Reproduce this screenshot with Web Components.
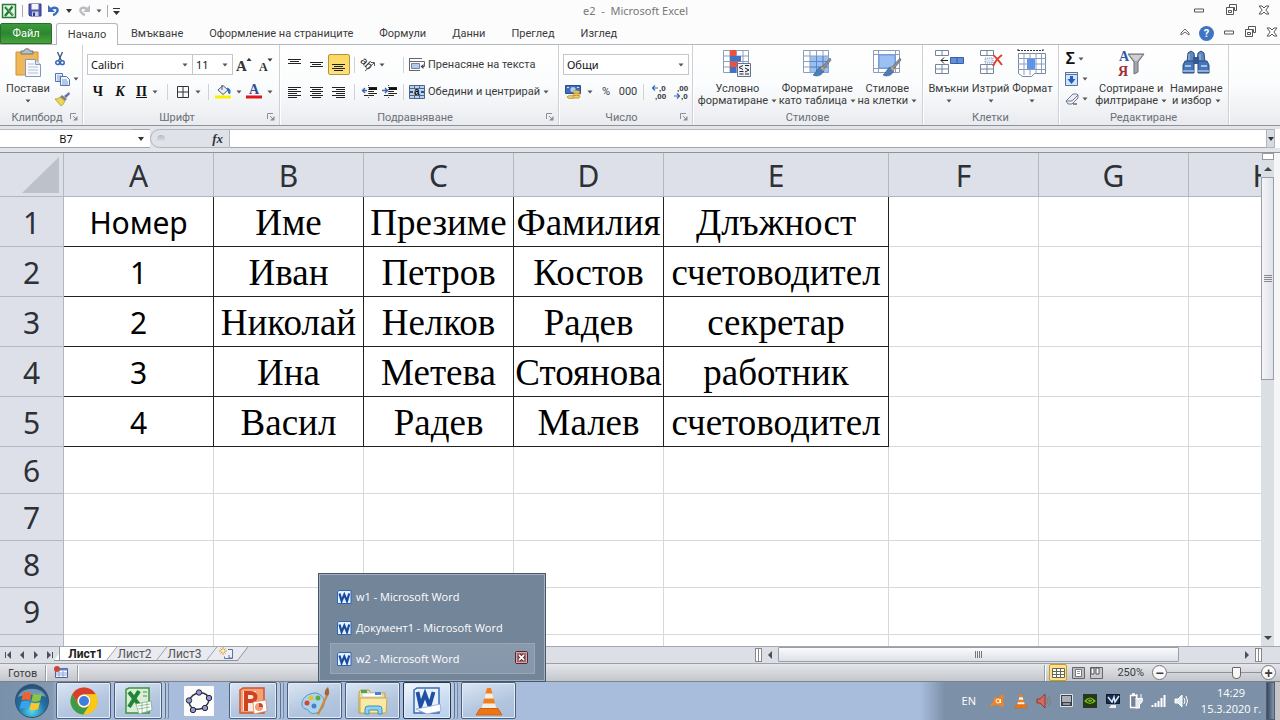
<!DOCTYPE html>
<html lang="bg">
<head>
<meta charset="utf-8">
<title>e2 - Microsoft Excel</title>
<style>
    html, body {
        margin: 0;
        height: 100%;
    }

    body {
        font: 11px/12px "Noto Sans", "Open Sans", sans-serif;
        color: #3b3b3b;
        background: #fcfcfd;
        overflow: hidden;
    }
</style>
</head>
<body>
<excel-app></excel-app>

<script>
// name: [width, height, svg body]
const lines = (list) => list.map(([x, y, w]) => `<path d="M${x} ${y}.5h${w}" stroke="#222"/>`).join('');
const sheetGrid = `<path d="M1.500 1.500h25v22h-25z" fill="#fff" stroke="#8a9dbb"/><path d="M8 1v23M14.500 1v23M21 1v23M1 7h26M1 12.500h26M1 18h26" stroke="#8a9dbb" fill="none"/>`;
const brush = `<path d="M28 9l-9 10 2 2 8-10z" fill="#8c8f94" stroke="#5a5d62" stroke-width=".6"/><path d="M20 18c-5 0-5 5-9 8 4 2 9 1 11-5z" fill="#4b7dbb" stroke="#2d5590" stroke-width=".6"/><path d="M18.500 19l2.500 3 1.500-1.500-2.500-3z" fill="#d9a35d"/>`;
const cone = `<path d="M8.500 24L14 3h4L23.500 24z" fill="#f07f1c"/><path d="M12.600 8.500h6.800l1.400 5h-9.600zM9.800 18.500h12.400l1.200 4.500H8.600z" fill="#f1efec"/><path d="M7 23.500h18l4 6.500H3z" fill="#ef7514" stroke="#c85a08" stroke-width=".8"/>`;
const wordLogo = `<path d="M1.500 3l1.500-1.500h12v13h-13.500z" fill="#e6f1fc" stroke="#2f66b5" /><path d="M3.500 4.500L5.600 12 8.300 5.500 11 12l2.200-7.500" fill="none" stroke="#174a9c" stroke-width="2.200"/>`;

const ICONS = {
    excel: [16, 16, `<path d="M1.500 1.500h13v13h-13z" fill="#e9f5e7" stroke="#257a36" stroke-width="1.500"/><path d="M4 4l8 8.500M11.500 3.500L4 13" stroke="#1f7d33" stroke-width="2.400"/><path d="M5 4l7 8" stroke="#9bd19a" stroke-width=".7"/>`],
    save: [14, 14, `<path d="M1 1h12v12H2l-1-1z" fill="#4f56ad" stroke="#353b88"/><path d="M3.500 1h7v5.500h-7z" fill="#f3f5fb"/><path d="M4 8.500h6.500V13H4z" fill="#c9cee6"/><path d="M5 9.500h2V13H5z" fill="#363c83"/>`],
    undo: [14, 12, `<path d="M4 5C9 2 12 5 10 8c-1 1.800-2.500 2.700-4 3" fill="none" stroke="#3b6ebd" stroke-width="2.400"/><path d="M1 1v7h7z" fill="#3b6ebd"/>`],
    redo: [14, 12, `<path d="M10 5C5 2 2 5 4 8c1 1.800 2.500 2.700 4 3" fill="none" stroke="#b9bcc1" stroke-width="2.400"/><path d="M13 1v7H6z" fill="#b9bcc1"/>`],
    qat: [7, 8, `<path d="M0 1.500h7" stroke="#333" /><path d="M0 4h7L3.500 8z" fill="#333"/>`],
    caret: [6, 4, `<path d="M.500.500h5L3 3.500z" fill="#555"/>`],
    caretDark: [6, 4, `<path d="M0 0h6L3 4z" fill="#333"/>`],
    launcher: [8, 8, `<path d="M.500 6V.500H6" fill="none" stroke="#8a8e96"/><path d="M3 3l3 3" stroke="#8a8e96"/><path d="M7.500 3v4.500H3z" fill="#8a8e96"/>`],
    paste: [28, 30, `<path d="M2 4h22v23H2z" fill="#efb65a" stroke="#cf9138"/><path d="M7 3h3c0-3 6-3 6 0h3v3H7z" fill="#b9bdc4" stroke="#6f747c"/><path d="M11.500 11.500h10l5 5v12h-15z" fill="#f6f9fd" stroke="#8798b3"/><path d="M21.500 11.500v5h5" fill="#dbe4f0" stroke="#8798b3"/><path d="M14 16h6M14 19h10M14 22h10M14 25h10" stroke="#b6c2d4"/>`],
    cut: [10, 14, `<path d="M2.500 0l4 9M7.500 0l-4 9" stroke="#38557f" stroke-width="1.300"/><circle cx="2.700" cy="10.700" r="1.900" fill="none" stroke="#3569b4" stroke-width="1.500"/><circle cx="7.300" cy="10.700" r="1.900" fill="none" stroke="#3569b4" stroke-width="1.500"/>`],
    copy: [15, 13, `<path d="M.500.500h7v8h-7z" fill="#eef4fc" stroke="#4f75b0"/><path d="M2 3h4M2 5h4M2 7h3" stroke="#7a9ccd"/><path d="M5.500 3.500h6l3 3v6h-9z" fill="#eef4fc" stroke="#4f75b0"/><path d="M7 7h5M7 9h6M7 11h6" stroke="#7a9ccd"/>`],
    painter: [15, 14, `<path d="M14 0l-5 4 2 2 4-4z" fill="#6c6fae"/><path d="M7 3l5 4-2 2-5-4z" fill="#7e8288"/><path d="M5 5l5 4c-1 2-2 4-4 5L0 7c2 0 4-1 5-2z" fill="#ead65c" stroke="#a8902a" stroke-width=".7"/>`],
    borders: [14, 14, `<path d="M1.500 1.500h11v11h-11zM7 1v12M1 7h12" fill="none" stroke="#333"/>`],
    fill: [16, 15, `<path d="M3 6l5-4.500 5 4.500-5 4.500z" fill="#e8edf6" stroke="#50596a"/><path d="M7 1v5" stroke="#50596a"/><path d="M12.500 4c3 1 3 4 2 6-1-1-1.500-3-2-6z" fill="#2f6ac0" stroke="#2f6ac0"/><path d="M0 11.500h16v3H0z" fill="#f8f200"/>`],
    fontColor: [16, 15, `<text x="3" y="10" font-family="Liberation Serif" font-size="14" font-weight="bold" fill="#2c4f94">A</text><path d="M0 11.500h16v3H0z" fill="#e3141c"/>`],
    grow: [16, 16, `<text x="0" y="14" font-family="Liberation Serif" font-size="15" font-weight="bold" fill="#333">A</text><path d="M10.500 4h5L13 .800z" fill="#333"/>`],
    shrink: [16, 16, `<text x="1" y="14" font-family="Liberation Serif" font-size="12" font-weight="bold" fill="#333">A</text><path d="M9.500 1.500h5L12 4.500z" fill="#333"/>`],
    top: [14, 12, lines([[0, 0, 13], [2, 2, 9], [0, 4, 13]])],
    middle: [14, 12, lines([[0, 3, 13], [2, 5, 9], [0, 7, 13]])],
    bottom: [14, 12, lines([[0, 5, 13], [2, 7, 9], [0, 9, 13], [2, 11, 9]])],
    left: [14, 12, lines([[0, 1, 13], [0, 3, 9], [0, 5, 13], [0, 7, 9], [0, 9, 13], [0, 11, 9]])],
    center: [14, 12, lines([[0, 1, 13], [2, 3, 9], [0, 5, 13], [2, 7, 9], [0, 9, 13], [2, 11, 9]])],
    right: [14, 12, lines([[0, 1, 13], [4, 3, 9], [0, 5, 13], [4, 7, 9], [0, 9, 13], [4, 11, 9]])],
    orient: [16, 15, `<text x="0" y="8" transform="rotate(45 4 6)" font-family="Liberation Sans" font-size="11" fill="#222">ab</text><path d="M5 14l9-8M11 5.500h3.500V9" fill="none" stroke="#555"/>`],
    outdent: [15, 13, lines([[7, 2, 8], [7, 4, 8], [7, 6, 5], [7, 8, 8], [2, 10, 10]]) + `<path d="M7 4h8" stroke="#111" stroke-width="2"/><path d="M0 5.500h5M3 3L.500 5.500 3 8" fill="none" stroke="#3a5fb0" stroke-width="1.300"/><path d="M6.500 0v13" stroke="#555" stroke-dasharray="1 1"/>`],
    indent: [15, 13, lines([[7, 2, 8], [7, 4, 8], [7, 6, 5], [7, 8, 8], [2, 10, 10]]) + `<path d="M7 4h8" stroke="#111" stroke-width="2"/><path d="M0 5.500h5M3 3l2.500 2.500L3 8" fill="none" stroke="#3a5fb0" stroke-width="1.300"/><path d="M6.500 0v13" stroke="#555" stroke-dasharray="1 1"/>`],
    wrap: [16, 15, `<path d="M.500 1v13M0 1.500h13M0 4.500h15.500v5H13M0 13.500h11" fill="none" stroke="#666"/><path d="M2.500 6.500h8v5h-8z" fill="#b7cbe6" stroke="#6d85a9"/><path d="M14.500 7l-3 2.500 3 2.500z" fill="#444"/>`],
    merge: [16, 14, `<path d="M.500.500h15v13H.500z" fill="#bcd2ef" stroke="#49678f"/><path d="M0 3.500h16M0 10.500h16M5.500 0v3M10.500 0v3M5.500 10.500V14M10.500 10.500V14" stroke="#49678f"/><path d="M1 7h3M12 7h3" stroke="#123" stroke-width="1.500"/><text x="5" y="9.500" font-family="Liberation Sans" font-size="10" font-weight="bold" fill="#111">a</text>`],
    money: [17, 15, `<path d="M.500 1.500h15v8H.500z" fill="#3f6fb8" stroke="#2c4f8a"/><circle cx="8" cy="5.500" r="2.600" fill="#b7cdec"/><path d="M2 3.500h2M12 3.500h2" stroke="#d7e4f6"/><ellipse cx="11.500" cy="8" rx="3.500" ry="1.500" fill="#f2cd66" stroke="#a67b1e" stroke-width=".6"/><ellipse cx="11.500" cy="10.500" rx="3.500" ry="1.500" fill="#f2cd66" stroke="#a67b1e" stroke-width=".6"/><ellipse cx="6" cy="13" rx="4" ry="1.500" fill="#f2cd66" stroke="#a67b1e" stroke-width=".6"/><ellipse cx="11.500" cy="12.700" rx="3.500" ry="1.500" fill="#f2cd66" stroke="#a67b1e" stroke-width=".6"/>`],
    incDec: [15, 16, `<text x="7" y="7" font-family="Liberation Sans" font-size="8" font-weight="bold" fill="#333">,0</text><text x="3" y="15" font-family="Liberation Sans" font-size="8" font-weight="bold" fill="#333">,00</text><path d="M0 4h6M3 1.500L.500 4 3 6.500" fill="none" stroke="#2f68b8" stroke-width="1.200"/>`],
    decDec: [15, 16, `<text x="3" y="7" font-family="Liberation Sans" font-size="8" font-weight="bold" fill="#333">,00</text><text x="7" y="15" font-family="Liberation Sans" font-size="8" font-weight="bold" fill="#333">,0</text><path d="M0 12h6M3 9.500L5.500 12 3 14.500" fill="none" stroke="#2f68b8" stroke-width="1.200"/>`],
    conditional: [30, 28, sheetGrid + `<path d="M8 1h6v6H8zM8 12.500h8V18H8z" fill="#e9523f"/><path d="M8 7h11v5.500H8zM8 18h6v6H8z" fill="#4471c4"/><path d="M15.500 14.500h13v13h-13z" fill="#eef1f7" stroke="#66738a"/><path d="M21 16.500l-4 2 4 2M17.500 22.500h4M17.500 25h4M23 16.500h4M23 19l4 2-4 2M23 25h4" fill="none" stroke="#222"/>`],
    tableFormat: [30, 28, sheetGrid + `<path d="M8 7h19v17H8z" fill="#7ba9ea" opacity=".75"/><path d="M14.500 7v17M21 7v17M8 12.500h19M8 18h19" stroke="#5b87cb" fill="none"/>` + brush],
    cellStyles: [30, 28, `<path d="M1.500 1.500h26v22h-26z" fill="#fff" stroke="#8a9dbb"/><path d="M6.500 1v23M1 5.500h27M1 19.500h27M23.500 1v23" stroke="#8a9dbb" fill="none"/><path d="M7 6h16v13H7z" fill="#9cc0f3" stroke="#6e9add"/>` + brush],
    insertCells: [30, 28, `<path d="M1.500 1.500h13v5h-13zM1.500 15.500h13v9h-13zM8 1v6M8 15v10M1 20h14" fill="#fff" stroke="#75859f"/><path d="M16.500 8.500h13v6h-13z" fill="#5e8fe0" stroke="#3a5f9d"/><path d="M23 8v7" stroke="#3a5f9d"/><path d="M7 11.500h7M10 8.500l-3 3 3 3" fill="none" stroke="#222"/>`],
    deleteCells: [30, 28, `<path d="M4.500 1.500h13v5h-13zM4.500 15.500h13v9h-13zM11 1v6M11 15v10M4 20h14" fill="#fff" stroke="#75859f"/><path d="M9 9h8v5H9z" fill="#dce8fa" stroke="#8394ad" stroke-dasharray="1 1"/><path d="M17 6c3 2 6 6 9 10M26 6c-3 2-7 7-9 11" fill="none" stroke="#e0402e" stroke-width="2"/>`],
    formatCells: [30, 29, `<path d="M1 1.500h25M1 0v3M26 0v3" stroke="#333" stroke-dasharray="2 1"/><path d="M1.500 4.500h27v20h-11l-3 3h-9l-4-3z" fill="#fff" stroke="#7789a6"/><path d="M7 4v22M13 4v22M19 4v21M24.500 4v21M1 9.500h28M1 15h28M1 20.500h28" stroke="#8a9dbb" fill="none"/><path d="M10 10h8v10h-8z" fill="#5e95ea"/>`],
    fillDown: [14, 15, `<path d="M.500.500h12v13H.500z" fill="#d4e4f8" stroke="#54729f"/><path d="M.500.500h12v2H.500z" fill="#e9eef6" stroke="#54729f"/><path d="M6.500 4v4" stroke="#1f5fbe" stroke-width="3"/><path d="M2.500 7h8l-4 5z" fill="#1f5fbe"/>`],
    eraser: [14, 12, `<path d="M1 8l7-7h4l1 1v3l-6 6H3z" fill="#eceff5" stroke="#6f7a92"/><path d="M8 11h4" stroke="#222"/><path d="M1 8h5l2-1 5-5" fill="none" stroke="#6f7a92"/>`],
    sort: [30, 28, `<text x="3" y="12" font-family="Liberation Serif" font-size="14" font-weight="bold" fill="#3159a6">A</text><text x="2" y="27" font-family="Liberation Serif" font-size="14" font-weight="bold" fill="#a02c35">Я</text><path d="M12 5h16l-6 8v10l-4 2V13z" fill="#a3a6ab" stroke="#6c6f75"/><path d="M14 6h12l-5 6h-2z" fill="#cfd1d5"/>`],
    find: [30, 28, `<path d="M7 4l3-2 3 2 1 9H6zM17 4l3-2 3 2 1 9h-8z" fill="#5f86bd" stroke="#2c4a7d"/><path d="M4 12h8l1 3v9H2v-8zM18 12h8l2 4v8H17v-9z" fill="#4775b8" stroke="#2c4a7d"/><path d="M12 8h6v7h-6z" fill="#35588f"/><path d="M4 17h6M20 17h6" stroke="#a6c3ea" stroke-width="2"/><path d="M8 5v6M19 5v6" stroke="#a6c3ea"/><path d="M2 22h11M17 22h11" stroke="#dce8f8"/>`],
    min: [12, 10, `<path d="M1.500 4h9v3h-9z" fill="#fff" stroke="#555"/>`],
    restore: [13, 12, `<path d="M4.500.500h7v6h-2v-3h-5z" fill="#fff" stroke="#555"/><path d="M1.500 3.500h7v7h-7z" fill="#fff" stroke="#555"/><path d="M3.500 6.500h3v2h-3z" fill="none" stroke="#555"/>`],
    close: [12, 10, `<path d="M1 1h3l2 2 2-2h3L7.800 5 11 9H8L6 7 4 9H1l3.200-4z" fill="#fff" stroke="#555"/>`],
    collapse: [10, 9, `<path d="M1 5l4-4 4 4v2L5 4 1 7z" fill="#fff" stroke="#666"/>`],
    first: [8, 8, `<path d="M1.500 1v6" stroke="#4b4f57"/><path d="M7 0v8L3 4z" fill="#4b4f57"/>`],
    prev: [8, 8, `<path d="M6 0v8L2 4z" fill="#4b4f57"/>`],
    next: [8, 8, `<path d="M2 0v8l4-4z" fill="#4b4f57"/>`],
    last: [8, 8, `<path d="M6.500 1v6" stroke="#4b4f57"/><path d="M1 0v8l4-4z" fill="#4b4f57"/>`],
    up: [8, 6, `<path d="M0 5h8L4 1z" fill="#444"/>`],
    down: [8, 6, `<path d="M0 1h8L4 5z" fill="#444"/>`],
    newSheet: [16, 13, `<path d="M5.500 9.500v2h8v-9H9" fill="#eef2f8" stroke="#5c73a0"/><path d="M10 8v3h3" fill="none" stroke="#5c73a0"/><path d="M4 0v8M0 4h8M1.500 1.500l5 5M6.500 1.500l-5 5" stroke="#e39a35"/><circle cx="4" cy="4" r="1.500" fill="#fff0bd"/>`],
    macro: [15, 13, `<path d="M1.500 2.500h12v9h-12z" fill="#fff" stroke="#4763a3"/><path d="M1.500 2.500h12v2h-12z" fill="#5f82c8"/><path d="M2 7h11M2 9h11M5 5v6M9 5v6" stroke="#8fa6d4"/><circle cx="3" cy="3" r="3" fill="#c9473a"/>`],
    viewNormal: [13, 10, `<path d="M.500.500h12v9H.500zM4.500 0v10M8.500 0v10M0 3.500h13M0 6.500h13" fill="#fff" stroke="#665"/>`],
    viewLayout: [13, 12, `<path d="M.500.500h12v11H.500z" fill="#bbbec4" stroke="#666"/><path d="M3.500 2.500h6v7h-6z" fill="#fff" stroke="#777"/><path d="M5 4.500h3M5 6.500h3" stroke="#999"/>`],
    viewBreak: [13, 12, `<path d="M.500.500h12v11H.500z" fill="#c6c9cf" stroke="#666"/><path d="M1 1h3v6H1zM6 1h3v6H6z" fill="#fff" stroke="#555"/>`],
    start: [36, 36, `<defs><radialGradient id="orb" cx=".5" cy=".8" r=".8"><stop offset="0" stop-color="#55dcf2"/><stop offset=".5" stop-color="#2070a5"/><stop offset="1" stop-color="#2b4f72"/></radialGradient></defs><circle cx="18" cy="18" r="16.500" fill="url(#orb)" stroke="#36536f"/><path d="M4 14C7 3 29 3 32 14c-8-3-20-3-28 0z" fill="#fff" opacity=".35"/><path d="M9 10.500c4-2 6-1 8.500 0l-1.500 7c-3-1.500-5-1.500-8.500 0z" fill="#f0622a"/><path d="M19 11c2.500 1 6 1 9-.500l-1.800 7c-3.500 1.500-6 1.500-8.700.500z" fill="#8cc640"/><path d="M7.200 19c4-2 6-1 8.500 0l-1.500 7c-3-1.500-5-1.500-8.700 0z" fill="#36a3ea"/><path d="M17.100 19.500c2.500 1 6 1.200 8.800-.300l-1.800 7c-3.500 1.500-6 1.200-8.800.200z" fill="#fcc62c"/>`],
    chrome: [28, 28, `<circle cx="14" cy="14" r="13.500" fill="#e4a90f"/><path d="M2.300 7.200A13.500 13.500 0 0 1 25.700 7.200H14a6.800 6.800 0 0 0-6 10z" fill="#d93d2d"/><path d="M2.300 7.200A13.500 13.500 0 0 0 13.400 27.500L19.900 17.400A6.800 6.800 0 0 1 8.100 17.400z" fill="#3a9b4b"/><path d="M13.400 27.500A13.500 13.500 0 0 0 25.700 7.200H14a6.800 6.800 0 0 1 5.900 10.200z" fill="#fbc816"/><circle cx="14" cy="14" r="6.400" fill="#fff"/><circle cx="14" cy="14" r="5" fill="#3f7de0"/>`],
    excelApp: [30, 28, `<path d="M3 2.500L6 1h20v25H3z" fill="#d9eed5" stroke="#3b9348" stroke-width="1.500"/><path d="M6 5l11 14M16 4L6 20" stroke="#228438" stroke-width="4"/><path d="M20 5h4M20 9h4" stroke="#8fc28c" stroke-width="2"/><path d="M13 17l15-3 1 9-13 4z" fill="#fff" stroke="#6ca777" stroke-width=".7"/><path d="M15 19l12-2M15 22l12-2M19 16v10M24 15v10" stroke="#6ca777" stroke-width=".7"/>`],
    geogebra: [30, 30, `<rect width="30" height="30" rx="1" fill="#fcfcfd"/><ellipse cx="15" cy="15" rx="10" ry="8" fill="none" stroke="#333" stroke-width="1.500" transform="rotate(-20 15 15)"/><g fill="#9297dc" stroke="#25252e"><circle cx="15" cy="6.500" r="2.700"/><circle cx="25" cy="12" r="2.700"/><circle cx="21" cy="22" r="2.700"/><circle cx="9" cy="24" r="2.700"/><circle cx="5" cy="14.500" r="2.700"/></g>`],
    powerpoint: [30, 28, `<path d="M2 3L5 1h21v25H2z" fill="#f4a177" stroke="#d2552b" stroke-width="1.500"/><path d="M5 4h13v20H5z" fill="#fbe9df"/><path d="M8 24V6h5c6 0 6 8 0 8H8" fill="none" stroke="#cf4320" stroke-width="4"/><path d="M15 15l13-2 1 11-13 3z" fill="#fff" stroke="#d77b58" stroke-width=".7"/><circle cx="21" cy="20" r="4" fill="#ef9d79"/><path d="M21 20v-4a4 4 0 0 1 4 4z" fill="#cf4320"/>`],
    paint: [30, 30, `<path d="M16 7C7 7 1 13 2 19c1 5 5 3 7 6 2 4 8 3 12-1s6-14-5-17z" fill="#a8d4ee" stroke="#5c93bb"/><circle cx="7" cy="17" r="2.500" fill="#d64539"/><circle cx="11" cy="12" r="2.500" fill="#e6bf36"/><circle cx="18" cy="12" r="2.500" fill="#60a944"/><circle cx="14" cy="20" r="2.500" fill="#4b7fc2"/><path d="M17 28l9-19 2 1-9 19z" fill="#d58635"/><path d="M25 9c-1-4 1-6 3-8 1 3 2 6 0 9z" fill="#a0653a"/>`],
    explorer: [32, 30, `<path d="M2 6l2-2h8l2 3h14v20H2z" fill="#f2dc8c" stroke="#bf9d3e"/><path d="M5 7h20v4H5z" fill="#fff" stroke="#c9c9c9"/><path d="M4 4h6v3H4z" fill="#49a65a"/><path d="M18 6h6v3h-6z" fill="#4884c2"/><path d="M3 12h27l-1 15H3z" fill="#f8e9a6" stroke="#caa94c"/><path d="M8 28v-5q0-3 3-3h11q3 0 3 3v5h-4v-4h-9v4z" fill="#8fd1ee" stroke="#3f92bb"/>`],
    wordApp: [30, 28, `<path d="M2 3L5 1h22v25H2z" fill="#e7f0fb" stroke="#3a6cb5" stroke-width="1.500"/><path d="M5.500 5l3 14 4.500-12 4.500 12 4-14" fill="none" stroke="#1d4fa3" stroke-width="3.800"/><path d="M4 22l11-2 13-3 1 7-14 3z" fill="#fff" stroke="#7f9fcc" stroke-width=".7"/>`],
    word: [16, 16, wordLogo],
    vlc: [32, 32, cone],
    vlcSmall: [16, 16, `<g transform="scale(.5)">${cone}</g>`],
    avast: [16, 16, `<path d="M12 1l2 2-1 4 1 5-2 2-4-2H4L1 14l-.500-3 3-2 .500-5 4 1z" fill="#f5821f"/><circle cx="8" cy="8" r="2" fill="none" stroke="#fff"/><path d="M10.500 6v4" stroke="#fff"/>`],
    redSpeaker: [16, 16, `<path d="M1 6h3l5-5v14l-5-5H1z" fill="#d8685c" stroke="#8e3a31"/><path d="M11 5q2 3 0 6M13 3q3 5 0 10" fill="none" stroke="#8f776f"/>`],
    panel: [16, 16, `<path d="M1.500 1.500h12v12h-12z" fill="#3a4047" stroke="#dfe3e7"/><path d="M3 3h9v6H3z" fill="#a9b0b7"/><path d="M4 11h7" stroke="#eee"/>`],
    nvidia: [16, 16, `<path d="M1 1h14v14H1z" fill="#26381a"/><path d="M2 8q6-7 12 0-6 6-12 0z" fill="#74b71b"/><path d="M5 8q3-4 6 0-3 3-6 0z" fill="none" stroke="#26381a"/>`],
    monitor: [16, 16, `<path d="M1.500 1.500h13v9h-13z" fill="#152e55" stroke="#10151f"/><path d="M6 12h5v3H4z" fill="#eee"/><path d="M3 4l4 5 2-5 1 5 4-6" fill="none" stroke="#d5e8fa" stroke-width="1.500"/>`],
    battery: [16, 16, `<path d="M2.500 2.500h6v12h-6zM4 1h3" fill="#738496" stroke="#fff" stroke-width="1.300"/><path d="M9 5V1M13 5V1M7.500 5.500h7q0 5-3 5.500v4h-4" fill="#e6eaee" stroke="#fff"/>`],
    signal: [16, 16, `<path d="M1.500 12v2M4.500 10v4M7.500 8v6M10.500 5v9M13.500 2v12" stroke="#fff" stroke-width="2"/>`],
    speaker: [16, 16, `<path d="M1 6h3l4-4v12l-4-4H1z" fill="#e8edf2" stroke="#fff"/><path d="M10 5q2 3 0 6M12 3q3 5 0 10" fill="none" stroke="#fff"/>`],
    redClose: [14, 14, `<rect x=".500" y=".500" width="12" height="12" rx="1.500" fill="#a9646a" stroke="#4a2a33"/><rect x="1.500" y="1.500" width="10" height="10" fill="none" stroke="#d8a6a8"/><path d="M4 4l5 5M9 4L4 9" stroke="#3b2027" stroke-width="3.400"/><path d="M4 4l5 5M9 4L4 9" stroke="#fff" stroke-width="1.800"/>`]
};

// Shared base: puts styles() and markup() into an open shadow root
class UIElement extends HTMLElement {
    constructor() {
        super();
        this.shadow = this.attachShadow({ mode: 'open' });
    }

    connectedCallback() {
        this.shadow.innerHTML = `<style>* { box-sizing: border-box; } button { font: inherit; color: inherit; background: none; border: 0; padding: 0; margin: 0; } ${this.styles()}</style>${this.markup()}`;
    }

    attr(name) {
        return this.getAttribute(name) || '';
    }
}

class XlIcon extends UIElement {
    styles() {
        return ':host { display: inline-flex; flex: none; } svg { display: block; overflow: visible; }';
    }

    markup() {
        const [w, h, body] = ICONS[this.attr('name')];
        return `<svg width="${w}" height="${h}" viewBox="0 0 ${w} ${h}" aria-hidden="true">${body}</svg>`;
    }
}

// Small ribbon button: optional icon, slotted text, optional menu arrow
class XlTool extends UIElement {
    styles() {
        return `
            :host { display: block; flex: none; width: 22px; }
            button { display: flex; width: 100%; height: var(--tool-height, 21px); align-items: center; justify-content: center; gap: 5px; white-space: nowrap; border: 1px solid transparent; border-radius: 2px; }
            :host([wide]) button { justify-content: flex-start; gap: 3px; }
            :host([active]) button { background: linear-gradient(#fbd763, #fde27c); border-color: #b5933c; }
        `;
    }

    markup() {
        const label = this.attr('label');
        return `
            <button ${label ? `aria-label="${label}"` : ''}>
                ${this.attr('icon') ? `<xl-icon name="${this.attr('icon')}"></xl-icon>` : ''}
                <slot></slot>
                ${this.hasAttribute('menu') ? '<xl-icon name="caret"></xl-icon>' : ''}
            </button>
        `;
    }
}

// Tall ribbon button with the icon above one or two lines of text
class XlBigTool extends UIElement {
    styles() {
        return `
            :host { display: block; flex: none; }
            button { display: flex; width: 100%; flex-direction: column; align-items: center; gap: 6px; white-space: nowrap; }
            .box { display: flex; height: 28px; align-items: center; }
            .second { display: flex; height: 12px; align-items: center; justify-content: center; gap: 3px; }
        `;
    }

    markup() {
        return `
            <button>
                <span class="box"><xl-icon name="${this.attr('icon')}"></xl-icon></span>
                <span>${this.attr('line1')}<span class="second">${this.attr('line2')}<xl-icon name="caret"></xl-icon></span></span>
            </button>
        `;
    }
}

class XlSelect extends UIElement {
    styles() {
        return `
            :host { display: flex; flex: none; align-items: center; height: 21px; background: #fff; border: 1px solid #c3c6cb; position: relative; }
            select { appearance: none; width: 100%; height: 100%; border: 0; padding: 0 0 0 3px; background: none; font: 11px "Noto Sans", sans-serif; color: #111; }
            xl-icon { position: absolute; right: 4px; pointer-events: none; }
        `;
    }

    markup() {
        return `<select aria-label="${this.attr('label')}"><option>${this.attr('value')}</option></select><xl-icon name="caret"></xl-icon>`;
    }
}

class XlGroup extends UIElement {
    styles() {
        return `
            :host { display: flex; flex: none; flex-direction: column; border-right: 1px solid #cdd0d5; box-shadow: 1px 0 #fff; }
            .body { flex: 1; padding: 4px 4px 0; }
            .foot { display: flex; align-items: center; justify-content: center; height: 15px; padding: 0 4px; color: #6b6f78; }
            .foot span { flex: 1; text-align: center; }
        `;
    }

    markup() {
        return `
            <div class="body"><slot></slot></div>
            <div class="foot"><span>${this.attr('label')}</span>${this.hasAttribute('launcher') ? '<button aria-label="Още"><xl-icon name="launcher"></xl-icon></button>' : ''}</div>
        `;
    }
}

class XlTitleBar extends UIElement {
    styles() {
        return `
            :host { display: flex; flex: none; align-items: center; height: 22px; color: #777; }
            .quick, .win { flex: 1; display: flex; align-items: center; }
            .quick { gap: 5px; padding-left: 1px; }
            .quick i { width: 1px; height: 12px; background: #aaa; }
            .win { justify-content: flex-end; gap: 20px; padding-right: 10px; }
            h1 { margin: 0; font: inherit; white-space: pre; }
        `;
    }

    markup() {
        return `
            <div class="quick">
                <xl-icon name="excel"></xl-icon>
                <i></i>
                <button aria-label="Запиши"><xl-icon name="save"></xl-icon></button>
                <button aria-label="Отмени"><xl-icon name="undo"></xl-icon></button>
                <xl-icon name="caretDark"></xl-icon>
                <button aria-label="Върни"><xl-icon name="redo"></xl-icon></button>
                <xl-icon name="caret"></xl-icon>
                <i></i>
                <button aria-label="Персонализиране"><xl-icon name="qat"></xl-icon></button>
            </div>
            <h1>e2  -  Microsoft Excel</h1>
            <div class="win">
                <button aria-label="Минимизирай"><xl-icon name="min"></xl-icon></button>
                <button aria-label="Възстанови"><xl-icon name="restore"></xl-icon></button>
                <button aria-label="Затвори"><xl-icon name="close"></xl-icon></button>
            </div>
        `;
    }
}

class XlTabs extends UIElement {
    styles() {
        return `
            :host { display: flex; flex: none; align-items: flex-end; height: 23px; border-bottom: 1px solid #b4b8be; font-family: Roboto, sans-serif; }
            button { height: 21px; padding: 0 13px; white-space: nowrap; }
            .file { width: 52px; padding: 0; margin-right: 4px; color: #fff; background: linear-gradient(#3c9a3b, #2c8730 50%, #4ba23d); border: 1px solid #26702c; border-radius: 2px 2px 0 0; }
            .current { width: 62px; height: 22px; padding: 0; margin-bottom: -1px; background: #fff; border: 1px solid #b4b8be; border-bottom: 0; border-radius: 3px 3px 0 0; }
            .win { flex: 1; display: flex; align-items: center; justify-content: flex-end; gap: 9px; height: 21px; padding-right: 2px; }
            .win button { padding: 0; height: auto; }
            .win .help { width: 15px; height: 15px; border-radius: 50%; background: #3f74c4; color: #fff; font-weight: bold; }
        `;
    }

    markup() {
        const tabs = ['Вмъкване', 'Оформление на страниците', 'Формули', 'Данни', 'Преглед', 'Изглед'];
        return `
            <button class="file">Файл</button>
            <button class="current">Начало</button>
            ${tabs.map((tab) => `<button>${tab}</button>`).join('')}
            <div class="win">
                <button aria-label="Свий лентата"><xl-icon name="collapse"></xl-icon></button>
                <button class="help">?</button>
                <button aria-label="Минимизирай"><xl-icon name="min"></xl-icon></button>
                <button aria-label="Възстанови"><xl-icon name="restore"></xl-icon></button>
                <button aria-label="Затвори"><xl-icon name="close"></xl-icon></button>
            </div>
        `;
    }
}

class XlRibbon extends UIElement {
    styles() {
        return `
            :host { display: flex; flex: none; height: 81px; background: linear-gradient(#fff, #fbfcfd 50%, #e9ebef); border-bottom: 1px solid #8f939a; font-family: Roboto, sans-serif; }
            .rows { display: grid; gap: 6px; padding-top: 5px; }
            .row { display: flex; align-items: center; height: 21px; }
            .row hr { flex: none; width: 1px; height: 16px; margin: 0 4px; border: 0; background: #cfd2d7; }
            .big { display: flex; justify-content: space-around; }
            .stack { display: flex; flex-direction: column; --tool-height: 20px; }
            .serif { font: bold 14px/20px "Liberation Serif", serif; color: #111; }
            .sum { font: bold 16px/18px "Liberation Sans", sans-serif; color: #111; }
            .rest { flex: 1; }
        `;
    }

    markup() {
        return `
            <xl-group label="Клипборд" launcher style="width: 83px">
                <div class="big">
                    <xl-big-tool icon="paste" line1="Постави" line2=""></xl-big-tool>
                    <div class="stack">
                        <xl-tool icon="cut" label="Изрежи" wide></xl-tool>
                        <xl-tool icon="copy" label="Копирай" menu wide></xl-tool>
                        <xl-tool icon="painter" label="Формат" wide></xl-tool>
                    </div>
                </div>
            </xl-group>
            <xl-group label="Шрифт" launcher style="width: 197px">
                <div class="rows">
                    <div class="row">
                        <xl-select value="Calibri" label="Шрифт" style="width: 106px"></xl-select>
                        <xl-select value="11" label="Размер" style="width: 40px; border-left: 0"></xl-select>
                        <xl-tool icon="grow" label="Увеличи"></xl-tool>
                        <xl-tool icon="shrink" label="Намали"></xl-tool>
                    </div>
                    <div class="row">
                        <xl-tool class="serif">Ч</xl-tool>
                        <xl-tool class="serif"><i>К</i></xl-tool>
                        <xl-tool class="serif" style="width: 32px" menu><u>П</u></xl-tool>
                        <hr>
                        <xl-tool icon="borders" label="Граници" style="width: 32px" menu></xl-tool>
                        <hr>
                        <xl-tool icon="fill" label="Запълване" style="width: 31px" menu></xl-tool>
                        <xl-tool icon="fontColor" label="Цвят" style="width: 31px" menu></xl-tool>
                    </div>
                </div>
            </xl-group>
            <xl-group label="Подравняване" launcher style="width: 279px">
                <div class="rows">
                    <div class="row">
                        <xl-tool icon="top" label="Горе"></xl-tool>
                        <xl-tool icon="middle" label="Среда"></xl-tool>
                        <xl-tool icon="bottom" label="Долу" active></xl-tool>
                        <hr>
                        <xl-tool icon="orient" label="Ориентация" style="width: 40px" menu wide></xl-tool>
                        <hr>
                        <xl-tool icon="wrap" style="width: 144px" wide>Пренасяне на текста</xl-tool>
                    </div>
                    <div class="row">
                        <xl-tool icon="left" label="Ляво"></xl-tool>
                        <xl-tool icon="center" label="Център"></xl-tool>
                        <xl-tool icon="right" label="Дясно"></xl-tool>
                        <hr>
                        <xl-tool icon="outdent" label="Намали отстъпа" style="width: 20px"></xl-tool>
                        <xl-tool icon="indent" label="Увеличи отстъпа" style="width: 20px"></xl-tool>
                        <hr>
                        <xl-tool icon="merge" style="width: 144px" wide menu>Обедини и центрирай</xl-tool>
                    </div>
                </div>
            </xl-group>
            <xl-group label="Число" launcher style="width: 134px">
                <div class="rows">
                    <div class="row"><xl-select value="Общи" label="Формат" style="width: 126px"></xl-select></div>
                    <div class="row">
                        <xl-tool icon="money" label="Валута" style="width: 32px" menu></xl-tool>
                        <xl-tool>%</xl-tool>
                        <xl-tool>000</xl-tool>
                        <hr>
                        <xl-tool icon="incDec" label="Увеличи"></xl-tool>
                        <xl-tool icon="decDec" label="Намали"></xl-tool>
                    </div>
                </div>
            </xl-group>
            <xl-group label="Стилове" style="width: 230px">
                <div class="big">
                    <xl-big-tool icon="conditional" line1="Условно" line2="форматиране"></xl-big-tool>
                    <xl-big-tool icon="tableFormat" line1="Форматиране" line2="като таблица"></xl-big-tool>
                    <xl-big-tool icon="cellStyles" line1="Стилове" line2="на клетки"></xl-big-tool>
                </div>
            </xl-group>
            <xl-group label="Клетки" style="width: 136px">
                <div class="big">
                    <xl-big-tool icon="insertCells" line1="Вмъкни" line2=""></xl-big-tool>
                    <xl-big-tool icon="deleteCells" line1="Изтрий" line2=""></xl-big-tool>
                    <xl-big-tool icon="formatCells" line1="Формат" line2=""></xl-big-tool>
                </div>
            </xl-group>
            <xl-group label="Редактиране" style="width: 170px">
                <div class="big">
                    <div class="stack">
                        <xl-tool class="sum" style="width: 28px" menu wide>Σ</xl-tool>
                        <xl-tool icon="fillDown" label="Запълване" style="width: 28px" menu wide></xl-tool>
                        <xl-tool icon="eraser" label="Изчисти" style="width: 28px" menu wide></xl-tool>
                    </div>
                    <xl-big-tool icon="sort" line1="Сортиране и" line2="филтриране"></xl-big-tool>
                    <xl-big-tool icon="find" line1="Намиране" line2="и избор"></xl-big-tool>
                </div>
            </xl-group>
            <div class="rest"></div>
        `;
    }
}

class XlFormulaBar extends UIElement {
    styles() {
        return `
            :host { display: flex; flex: none; height: 27px; padding: 3px 0 4px; background: #e3e5ea; border-bottom: 1px solid #8f939a; }
            input { border: 0; border-top: 1px solid #b4b8be; border-bottom: 1px solid #a1a5ad; padding: 0; background: #fff; font: inherit; color: #111; outline: 0; }
            .name { width: 132px; text-align: center; }
            .drop { display: flex; align-items: center; width: 18px; padding-left: 6px; background: #fff; border: solid #a1a5ad; border-width: 1px 0; }
            .fx { display: flex; align-items: center; justify-content: space-between; width: 80px; padding: 0 6px; background: #dfe2e9; border: 1px solid #b0b4bb; border-radius: 10px 0 0 10px; font: italic bold 13px/16px "Liberation Serif", serif; color: #333; }
            .knob { width: 8px; height: 8px; border-radius: 50%; background: linear-gradient(#b4b8c0, #e8eaef); }
            .formula { flex: 1; min-width: 0; }
            .expand { width: 9px; background: #d7dbe2; border: 1px solid #b0b4bb; display: flex; align-items: center; justify-content: center; }
            .edge { width: 5px; background: #fff; }
        `;
    }

    markup() {
        return `
            <input class="name" aria-label="Име" value="B7">
            <button class="drop" aria-label="Списък"><xl-icon name="caretDark"></xl-icon></button>
            <div class="fx"><span class="knob"></span><span>fx</span></div>
            <input class="formula" aria-label="Формула">
            <button class="expand" aria-label="Разгъни"><xl-icon name="caretDark"></xl-icon></button>
            <span class="edge"></span>
        `;
    }
}

class XlGrid extends UIElement {
    styles() {
        return `
            :host { display: flex; flex: 1; min-height: 0; background: #fff; }
            .view { flex: 1; min-width: 0; overflow: hidden; }
            table { table-layout: fixed; width: 0; border-collapse: separate; border-spacing: 0; }
            .head { width: 64px; }
            .col { width: 150px; }
            .col.e { width: 225px; }
            th, td { padding: 2px 0 0; height: 47px; text-align: center; white-space: nowrap; border: solid #d6d8db; border-width: 0 1px 1px 0; }
            th { font: 30px/40px "Noto Sans", sans-serif; color: #2d3137; background: #dde0e8; border-color: #b3b7be; }
            thead th { height: 44px; }
            td { font: 37px/40px "Liberation Serif", serif; color: #000; }
            .filled > * { height: 50px; }
            .filled .cell { border-color: #222; }
            .filled td:nth-child(2) { font: 30px/40px "Noto Sans", sans-serif; }
            .corner { padding: 4px 4px 3px 0; vertical-align: bottom; }
            .corner i { display: block; width: 37px; height: 36px; margin-left: auto; background: #bdc1c9; clip-path: polygon(100% 0, 100% 100%, 0 100%); }
            .scroll { display: flex; flex-direction: column; align-items: center; width: 13px; background: #d9dfe3; }
            .split { width: 12px; height: 7px; background: #fff; border: 1px solid #999; }
            .scroll button { display: flex; justify-content: center; align-items: center; width: 100%; height: 17px; flex: none; }
            .track { flex: 1; width: 100%; }
            .thumb { display: grid; place-content: center; gap: 1px; height: 45%; background: linear-gradient(90deg, #f4f5f9, #dfe2ea); border: 1px solid #9a9ea8; }
            .thumb i { width: 8px; height: 1px; background: #888; }
            .edge { width: 6px; background: #f6f6f6; }
        `;
    }

    markup() {
        const cols = ['A', 'B', 'C', 'D', 'E', 'F', 'G', 'H'];
        const data = [
            ['Номер', 'Име', 'Презиме', 'Фамилия', 'Длъжност'],
            ['1', 'Иван', 'Петров', 'Костов', 'счетоводител'],
            ['2', 'Николай', 'Нелков', 'Радев', 'секретар'],
            ['3', 'Ина', 'Метева', 'Стоянова', 'работник'],
            ['4', 'Васил', 'Радев', 'Малев', 'счетоводител']
        ];
        let rows = '';
        for (let r = 0; r < 9; r++) {
            const values = data[r] || [];
            const cells = cols.map((col, i) => `<td class="${values[i] ? 'cell' : ''}">${values[i] || ''}</td>`).join('');
            rows += `<tr class="${data[r] ? 'filled' : ''}"><th scope="row">${r + 1}</th>${cells}</tr>`;
        }
        // last row is only partly in view
        rows += `<tr><th></th>${cols.map(() => '<td></td>').join('')}</tr>`;
        return `
            <div class="view">
                <table>
                    <colgroup><col class="head">${cols.map((col) => `<col class="col ${col.toLowerCase()}">`).join('')}</colgroup>
                    <thead><tr><th class="corner"><i></i></th>${cols.map((col) => `<th scope="col">${col}</th>`).join('')}</tr></thead>
                    <tbody>${rows}</tbody>
                </table>
            </div>
            <div class="scroll">
                <span class="split"></span>
                <button aria-label="Нагоре"><xl-icon name="up"></xl-icon></button>
                <div class="track"><div class="thumb"><i></i><i></i><i></i><i></i></div></div>
                <button aria-label="Надолу"><xl-icon name="down"></xl-icon></button>
            </div>
            <div class="edge"></div>
        `;
    }
}

class XlSheetBar extends UIElement {
    styles() {
        return `
            :host { display: flex; flex: none; height: 17px; background: #dcdfe6; border-top: 1px solid #a3a7af; }
            .nav { display: flex; align-items: center; gap: 6px; width: 59px; padding-left: 4px; }
            .nav button, .scroll button { display: flex; justify-content: center; }
            .tabs { flex: 1; display: flex; padding-bottom: 2px; }
            .tabs button { position: relative; z-index: 0; width: 50px; height: 14px; padding-right: 5px; font: 12px/14px Roboto, sans-serif; color: #555; }
            .tabs button::before { content: ""; position: absolute; z-index: -1; inset: 0; background: #e9ebf0; border: solid #8d9199; border-width: 0 1px 1px 0; transform: skewX(-38deg); }
            .tabs .current { width: 53px; padding-right: 0; font-weight: bold; color: #222; }
            .tabs .current::before { background: #fff; }
            .tabs .current::after { content: ""; position: absolute; z-index: -1; inset: 0 40px 0 0; background: #fff; border: solid #8d9199; border-width: 0 0 1px 1px; }
            .tabs .add { width: 31px; padding-right: 2px; display: flex; justify-content: center; }
            .scroll { display: flex; align-items: center; width: 41%; }
            .split { width: 7px; height: 14px; background: linear-gradient(90deg, #fff 2px, #888 2px, #888 3px, #fff 3px); border: 1px solid #888; }
            .scroll button { width: 16px; }
            .track { flex: 1; height: 100%; }
            .thumb { display: flex; justify-content: center; align-items: center; gap: 1px; width: 87%; height: 15px; background: linear-gradient(#fafbfc, #dde0e7); border: 1px solid #9a9ea8; border-radius: 1px; }
            .thumb i { width: 1px; height: 7px; background: #777; }
            .edge { width: 18px; }
        `;
    }

    markup() {
        return `
            <div class="nav">
                <button aria-label="Първи"><xl-icon name="first"></xl-icon></button>
                <button aria-label="Предишен"><xl-icon name="prev"></xl-icon></button>
                <button aria-label="Следващ"><xl-icon name="next"></xl-icon></button>
                <button aria-label="Последен"><xl-icon name="last"></xl-icon></button>
            </div>
            <div class="tabs">
                <button class="current">Лист1</button>
                <button>Лист2</button>
                <button>Лист3</button>
                <button class="add" aria-label="Нов лист"><xl-icon name="newSheet"></xl-icon></button>
            </div>
            <div class="scroll">
                <span class="split"></span>
                <button aria-label="Наляво"><xl-icon name="prev"></xl-icon></button>
                <div class="track"><div class="thumb"><i></i><i></i><i></i><i></i></div></div>
                <button aria-label="Надясно"><xl-icon name="next"></xl-icon></button>
                <span class="split"></span>
                <span class="edge"></span>
            </div>
        `;
    }
}

class XlStatusBar extends UIElement {
    styles() {
        return `
            :host { display: flex; flex: none; align-items: center; height: 19px; background: linear-gradient(#e4e6ea, #c3c6cc); border-top: 1px solid #9b9fa7; border-bottom: 1px solid #7d828b; }
            .left { flex: 1; display: flex; align-items: center; gap: 8px; padding-left: 8px; }
            hr { width: 1px; height: 16px; margin: 0; border: 0; background: #999da5; box-shadow: 1px 0 #fff; }
            .views { display: flex; align-items: center; gap: 5px; padding: 0 14px 0 4px; }
            .views button { display: flex; }
            .views .on { align-items: center; justify-content: center; width: 18px; height: 17px; background: #fde288; border: 1px solid #c79a2c; border-radius: 2px; }
            .zoom { display: flex; align-items: center; margin-left: 8px; }
            .zoom button { width: 15px; height: 15px; padding: 0; border: 1px solid #777; border-radius: 50%; background: #fafafa; font: bold 14px/12px "Liberation Sans", sans-serif; }
            .value { font-family: Roboto, sans-serif; }
            input { appearance: none; width: 94px; height: 15px; margin: 0; background: linear-gradient(#8d919a, #8d919a) center / 100% 1px no-repeat; }
            input::-webkit-slider-thumb { appearance: none; width: 9px; height: 12px; background: #f7f7f7; border: 1px solid #666; border-radius: 1px 1px 4px 4px; }
            .end { width: 4px; }
        `;
    }

    markup() {
        return `
            <div class="left"><span>Готов</span><hr><xl-icon name="macro"></xl-icon><hr></div>
            <hr>
            <div class="views">
                <button class="on" aria-label="Нормален"><xl-icon name="viewNormal"></xl-icon></button>
                <button aria-label="Страница"><xl-icon name="viewLayout"></xl-icon></button>
                <button aria-label="Прекъсвания"><xl-icon name="viewBreak"></xl-icon></button>
            </div>
            <span class="value">250%</span>
            <div class="zoom">
                <button aria-label="Намали">−</button>
                <input type="range" aria-label="Мащаб" min="0" max="100" value="76">
                <button aria-label="Увеличи">+</button>
            </div>
            <span class="end"></span>
        `;
    }
}

class WinPreview extends UIElement {
    styles() {
        return `
            :host { display: block; width: 228px; padding: 7px 10px 7px 11px; background: #738599; border: 1px solid #46566b; box-shadow: inset 0 0 0 1px #a4b1c0; color: #fff; font-family: "Open Sans", sans-serif; }
            ul { margin: 0; padding: 0; list-style: none; }
            li { display: flex; align-items: center; gap: 4px; height: 31px; padding: 0 5px; border: 1px solid transparent; }
            li.hover { background: linear-gradient(#8a9aad, #8797ab); border-color: #98a6b6; }
            span { flex: 1; }
        `;
    }

    markup() {
        return `
            <ul>
                <li><xl-icon name="word"></xl-icon><span>w1 - Microsoft Word</span></li>
                <li><xl-icon name="word"></xl-icon><span>Документ1 - Microsoft Word</span></li>
                <li class="hover"><xl-icon name="word"></xl-icon><span>w2 - Microsoft Word</span><button aria-label="Затвори"><xl-icon name="redClose"></xl-icon></button></li>
            </ul>
        `;
    }
}

class WinTaskBar extends UIElement {
    styles() {
        return `
            :host { display: flex; flex: none; position: relative; height: 38px; background: linear-gradient(90deg, #7890ab 0, #8499b2 52px, #a8bddc 60px, #a8bddc 920px, #7c90a8 945px, #7c90a8); color: #fff; font-family: "Open Sans", sans-serif; }
            .start { width: 56px; padding: 1px 0 0 7px; }
            .apps { flex: 1; display: flex; gap: 3px; }
            .app { display: flex; width: 55px; height: 37px; align-items: center; justify-content: center; background: linear-gradient(160deg, #dbe6f4, #b3c6df 60%, #a9bedb); border: 1px solid #4c607d; border-radius: 2px; box-shadow: inset 0 0 0 1px #e3ecf7; }
            .app.multi { width: 48px; margin-right: 7px; box-shadow: inset 0 0 0 1px #e3ecf7, 3px 0 #b6c8e0, 4px 0 #5f7492, 6px 0 #b0c4de, 7px 0 #7489a6; }
            .app.plain { width: 53px; background: none; border-color: transparent; box-shadow: none; margin-right: 1px; }
            .app.on { background: linear-gradient(160deg, #f2f7fd, #c9dbf0 60%, #b9d0ec); border-color: #26384f; }
            .tray { display: flex; align-items: center; gap: 7px; }
            .lang { margin-right: 7px; }
            .clock { width: 66px; text-align: center; line-height: 16px; margin-left: 1px; }
            .peek { width: 9px; height: 100%; margin-left: -5px; background: linear-gradient(90deg, #37485d, #8295ab); border: 1px solid #4b5d73; }
            .edge { width: 5px; height: 100%; margin-left: -7px; background: #c7c5c9; }
            win-preview { position: absolute; left: 318px; bottom: 100%; }
        `;
    }

    markup() {
        const apps = [
            ['chrome', 'Chrome', ''], ['excelApp', 'Excel', 'multi'], ['geogebra', 'GeoGebra', 'plain'],
            ['powerpoint', 'PowerPoint', 'multi'], ['paint', 'Paint', ''], ['explorer', 'Explorer', ''],
            ['wordApp', 'Word', 'multi on'], ['vlc', 'VLC', '']
        ];
        const tray = ['avast', 'vlcSmall', 'redSpeaker', 'panel', 'nvidia', 'monitor', 'battery', 'signal', 'speaker'];
        return `
            <button class="start" aria-label="Старт"><xl-icon name="start"></xl-icon></button>
            <div class="apps">${apps.map(([icon, name, cls]) => `<button class="app ${cls}" aria-label="${name}"><xl-icon name="${icon}"></xl-icon></button>`).join('')}</div>
            <div class="tray">
                <span class="lang">EN</span>
                ${tray.map((icon) => `<xl-icon name="${icon}"></xl-icon>`).join('')}
                <div class="clock">14:29<br>15.3.2020 г.</div>
                <button class="peek" aria-label="Работен плот"></button>
                <span class="edge"></span>
            </div>
            <win-preview></win-preview>
        `;
    }
}

class ExcelApp extends UIElement {
    styles() {
        return ':host { display: flex; flex-direction: column; height: 100vh; }';
    }

    markup() {
        return `
            <xl-title-bar></xl-title-bar>
            <xl-tabs></xl-tabs>
            <xl-ribbon></xl-ribbon>
            <xl-formula-bar></xl-formula-bar>
            <xl-grid></xl-grid>
            <xl-sheet-bar></xl-sheet-bar>
            <xl-status-bar></xl-status-bar>
            <win-task-bar></win-task-bar>
        `;
    }
}

customElements.define('xl-icon', XlIcon);
customElements.define('xl-tool', XlTool);
customElements.define('xl-big-tool', XlBigTool);
customElements.define('xl-select', XlSelect);
customElements.define('xl-group', XlGroup);
customElements.define('xl-title-bar', XlTitleBar);
customElements.define('xl-tabs', XlTabs);
customElements.define('xl-ribbon', XlRibbon);
customElements.define('xl-formula-bar', XlFormulaBar);
customElements.define('xl-grid', XlGrid);
customElements.define('xl-sheet-bar', XlSheetBar);
customElements.define('xl-status-bar', XlStatusBar);
customElements.define('win-preview', WinPreview);
customElements.define('win-task-bar', WinTaskBar);
customElements.define('excel-app', ExcelApp);
</script>
</body>
</html>
